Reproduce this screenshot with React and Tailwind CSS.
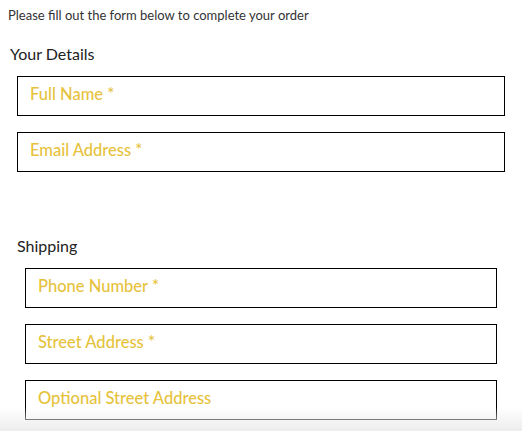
import React from 'react';

const Field = ({ placeholder }) => (
  <input
    type="text"
    placeholder={placeholder}
    className="block w-full h-[40px] border border-black bg-transparent pl-3 pb-[4px] text-[16.5px] font-medium text-gray-800 placeholder:text-[#e6c23c] focus:outline-none"
  />
);

export default function App() {
  return (
    <div
      className="relative w-[522px] h-[431px] overflow-hidden bg-white"
      style={{ fontFamily: 'Lato, "Noto Sans", sans-serif' }}
    >
      <p className="pl-2 pt-[7px] text-[13px] leading-[16px] text-[#333]">
        Please fill out the form below to complete your order
      </p>

      {/* Your details */}
      <h3 className="mt-[21px] pl-[10px] text-[16px] leading-[20px] text-[#222]">Your Details</h3>
      <div className="mt-[12px] ml-[17px] w-[488px] flex flex-col gap-[16px]">
        <Field placeholder="Full Name *" />
        <Field placeholder="Email Address *" />
      </div>

      {/* Shipping */}
      <h3 className="mt-[64px] pl-[17px] text-[16px] leading-[20px] text-[#222]">Shipping</h3>
      <div className="mt-[12px] ml-[25px] w-[472px] flex flex-col gap-[16px]">
        <Field placeholder="Phone Number *" />
        <Field placeholder="Street Address *" />
        <Field placeholder="Optional Street Address" />
      </div>

      {/* bottom fade */}
      <div className="pointer-events-none absolute bottom-0 left-0 right-0 h-[24px] bg-gradient-to-b from-transparent to-[#ededed]" />
    </div>
  );
}
